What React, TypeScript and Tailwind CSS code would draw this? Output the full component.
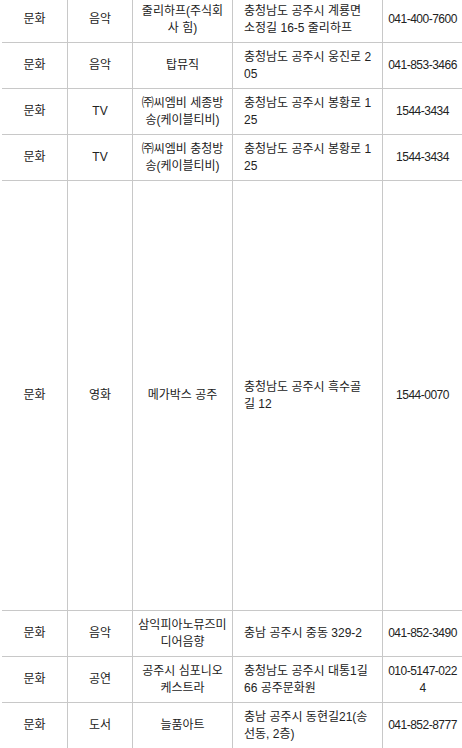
import React from "react";

type Row = {
  cat: string;
  kind: string;
  name: string[];
  addr: string[];
  tel: string[];
  h: string;
};

const rows: Row[] = [
  { cat: "문화", kind: "음악", name: ["줄리하프(주식회", "사 힘)"], addr: ["충청남도 공주시 계룡면", "소정길 16-5 줄리하프"], tel: ["041-400-7600"], h: "h-[46px]" },
  { cat: "문화", kind: "음악", name: ["탑뮤직"], addr: ["충청남도 공주시 웅진로 2", "05"], tel: ["041-853-3466"], h: "h-[46px]" },
  { cat: "문화", kind: "TV", name: ["㈜씨엠비 세종방", "송(케이블티비)"], addr: ["충청남도 공주시 봉황로 1", "25"], tel: ["1544-3434"], h: "h-[46px]" },
  { cat: "문화", kind: "TV", name: ["㈜씨엠비 충청방", "송(케이블티비)"], addr: ["충청남도 공주시 봉황로 1", "25"], tel: ["1544-3434"], h: "h-[46px]" },
  { cat: "문화", kind: "영화", name: ["메가박스 공주"], addr: ["충청남도 공주시 흑수골", "길 12"], tel: ["1544-0070"], h: "h-[430px]" },
  { cat: "문화", kind: "음악", name: ["삼익피아노뮤즈미", "디어음향"], addr: ["충남 공주시 중동 329-2"], tel: ["041-852-3490"], h: "h-[46px]" },
  { cat: "문화", kind: "공연", name: ["공주시 심포니오", "케스트라"], addr: ["충청남도 공주시 대통1길", "66 공주문화원"], tel: ["010-5147-022", "4"], h: "h-[46px]" },
  { cat: "문화", kind: "도서", name: ["늘품아트"], addr: ["충남 공주시 동현길21(송", "선동, 2층)"], tel: ["041-852-8777"], h: "h-[46px]" },
];

const Lines = ({ lines }: { lines: string[] }) => (
  <div>
    {lines.map((l, i) => (
      <div key={i} className="whitespace-nowrap">
        {l}
      </div>
    ))}
  </div>
);

export default function App() {
  return (
    <div
      className="w-[462px] h-[748px] overflow-hidden bg-white pl-[2px] text-[12px] leading-[17px] text-[#222]"
      style={{ fontFamily: '"Liberation Sans", "Noto Sans CJK KR", sans-serif' }}
    >
      <div className="-mt-[3px] grid grid-cols-[66px_65px_100px_150px_1fr]">
        {rows.map((r, i) => (
          <React.Fragment key={i}>
            <div className={`${r.h} flex items-center justify-center border-r border-b border-[#c8c8c8]`}>
              {r.cat}
            </div>
            <div className={`${r.h} flex items-center justify-center border-r border-b border-[#c8c8c8]`}>
              {r.kind}
            </div>
            <div className={`${r.h} flex items-center justify-center text-center border-r border-b border-[#c8c8c8]`}>
              <Lines lines={r.name} />
            </div>
            <div className={`${r.h} flex items-center pl-[11px] border-r border-b border-[#c8c8c8]`}>
              <Lines lines={r.addr} />
            </div>
            <div className={`${r.h} flex items-center justify-center text-center tracking-[-0.5px] border-b border-[#c8c8c8]`}>
              <Lines lines={r.tel} />
            </div>
          </React.Fragment>
        ))}
      </div>
    </div>
  );
}
